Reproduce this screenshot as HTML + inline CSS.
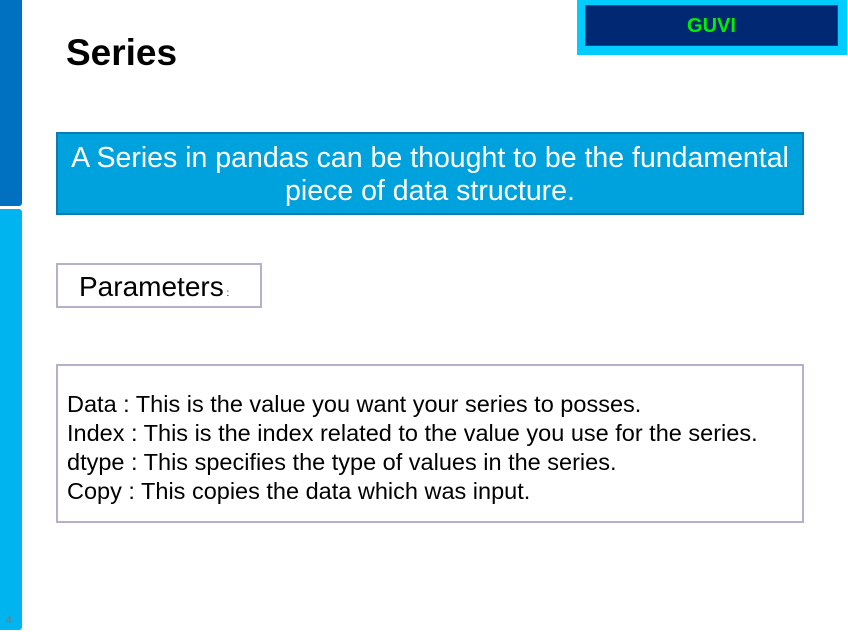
<!DOCTYPE html>
<html><head><style>
body{margin:0;width:848px;height:632px;background:#fff;position:relative;overflow:hidden;font-family:"Liberation Sans",sans-serif}
div{position:absolute;box-sizing:border-box}
</style></head><body>
<div style="left:0;top:0;width:22px;height:206px;background:#0070c0;border-radius:0 0 3px 0"></div>
<div style="left:0;top:209px;width:22px;height:421px;background:#00b4ef;border-radius:0 3px 3px 0"></div>
<div style="left:6px;top:615px;font-size:10px;color:#c06040">4</div>
<div style="left:577px;top:0;width:270px;height:55px;background:#00ccff"></div>
<div style="left:585px;top:5px;width:253px;height:41px;background:#002873;border:1px solid #0050a0;color:#00ee00;font-weight:bold;font-size:20px;text-align:center;line-height:40px">GUVI</div>
<div style="left:66px;top:32px;font-size:37px;font-weight:bold;color:#000">Series</div>
<div style="left:56px;top:132px;width:748px;height:83px;background:#00a2de;border:2px solid #0a7cb0;color:#fff;font-size:28.5px;text-align:center;line-height:33px;padding-top:8px;white-space:nowrap">A Series in pandas can be thought to be the fundamental<br>piece of data structure.</div>
<div style="left:56px;top:263px;width:206px;height:45px;border:2px solid #b8b0c8;font-size:28px;padding:6px 0 0 21px;white-space:nowrap">Parameters<span style="font-size:10px"> :</span></div>
<div style="left:56px;top:364px;width:748px;height:159px;border:2px solid #b8b0c8;font-size:23.5px;line-height:29px;padding:24px 0 0 9px;color:#000;white-space:nowrap">Data : This is the value you want your series to posses.<br>Index : This is the index related to the value you use for the series.<br>dtype : This specifies the type of values in the series.<br>Copy : This copies the data which was input.</div>
</body></html>
